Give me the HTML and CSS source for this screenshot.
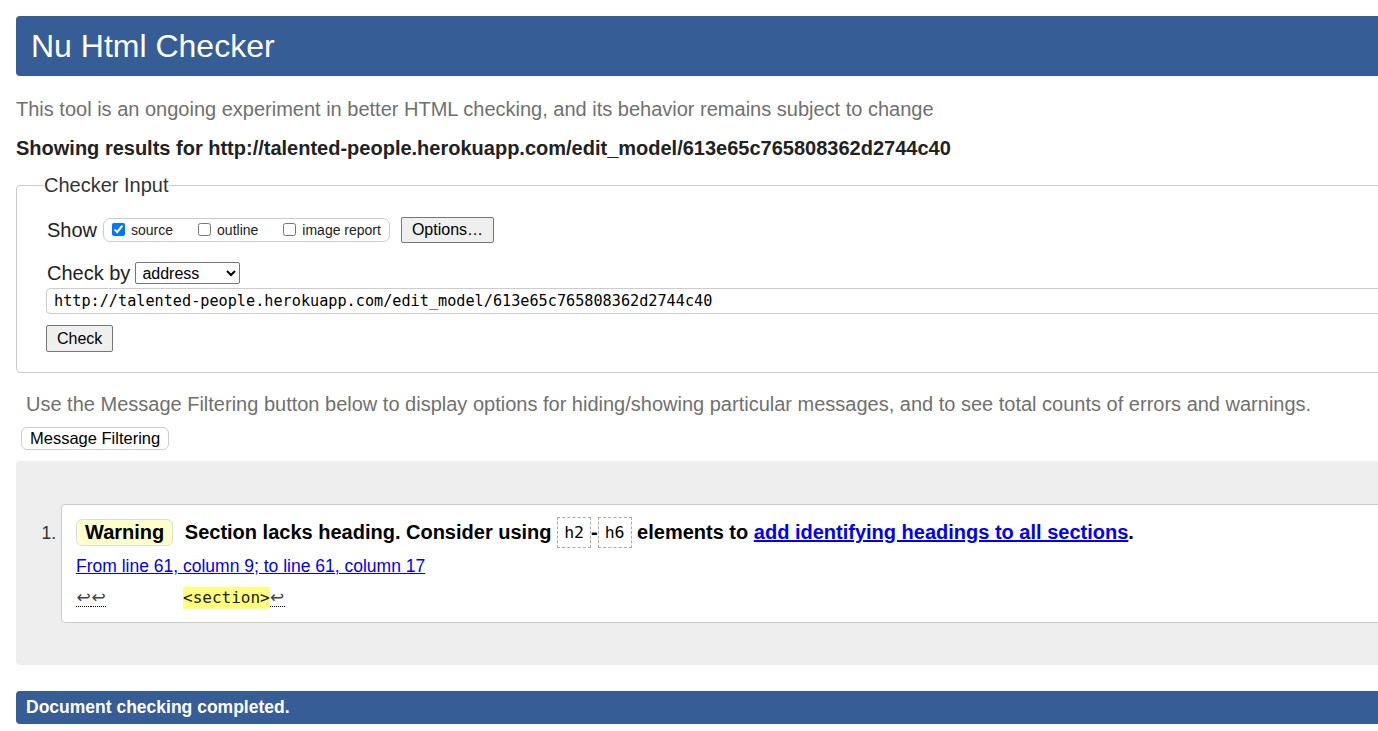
FILE: index.html
```html
<!DOCTYPE html>
<html lang="en">
<head>
<meta charset="utf-8">
<title>Nu Html Checker</title>
<link rel="stylesheet" href="styles.css">
</head>
<body>
<div class="page">
  <h1 class="title">Nu Html Checker</h1>
  <p class="intro">This tool is an ongoing experiment in better HTML checking, and its behavior remains subject to change</p>
  <p class="showing">Showing results for http://talented-people.herokuapp.com/edit_model/613e65c765808362d2744c40</p>
  <form class="checker-form">
    <fieldset class="checker">
      <legend class="legend">Checker Input</legend>
      <div class="row show-row">
        <span class="lbl">Show</span>
        <span class="opts">
          <label class="opt"><input class="cb" type="checkbox" checked>source</label>
          <label class="opt"><input class="cb" type="checkbox">outline</label>
          <label class="opt"><input class="cb" type="checkbox">image report</label>
        </span>
        <button class="btn options-btn" type="button">Options…</button>
      </div>
      <div class="row by-row">
        <span class="lbl">Check by</span>
        <select class="sel"><option>address</option></select>
      </div>
      <input class="url" type="text" value="http://talented-people.herokuapp.com/edit_model/613e65c765808362d2744c40">
      <button class="btn check-btn" type="button">Check</button>
    </fieldset>
  </form>
  <p class="filter-note">Use the Message Filtering button below to display options for hiding/showing particular messages, and to see total counts of errors and warnings.</p>
  <button class="filter-btn" type="button">Message Filtering</button>
  <div class="results">
    <ol class="msgs">
      <li class="msg">
        <p class="message"><span class="badge">Warning</span> Section lacks heading. Consider using <code class="tag">h2</code>-<code class="tag">h6</code> elements to <a class="ref" href="#">add identifying headings to all sections</a>.</p>
        <p class="location"><a class="loc" href="#">From line 61, column 9; to line 61, column 17</a></p>
        <p class="extract"><span class="lf">↩</span><span class="lf">↩</span><span class="gap"></span><b class="hl">&lt;section&gt;</b><span class="lf">↩</span></p>
      </li>
    </ol>
  </div>
  <p class="done">Document checking completed.</p>
</div>
</body>
</html>
```
FILE: styles.css
```css
html {
  overflow: hidden;
  background: #fff;
}

body {
  margin: 16px 0 0 16px;
  font-family: "Liberation Sans", Arial, sans-serif;
  font-size: 20px;
  color: #000;
}

.page {
  width: 1380px;
}

.title {
  margin: 0;
  height: 60px;
  line-height: 60px;
  padding: 0 15px;
  background: #365d95;
  color: #fff;
  font-size: 32px;
  font-weight: normal;
  border-radius: 4px;
}

.intro {
  margin: 21px 0 0;
  line-height: 24px;
  color: #707070;
}

.showing {
  margin: 15px 0 0;
  line-height: 24px;
  font-weight: bold;
  color: #222;
}

.checker-form {
  margin: 13px 0 0;
}

.checker {
  margin: 0;
  padding: 20px 0 20px 29px;
  border: 1px solid #ccc;
  border-radius: 4px;
}

.legend {
  padding: 0;
  margin-left: -2px;
  line-height: 24px;
  color: #333;
}

.row {
  display: flex;
  align-items: center;
}

.lbl {
  color: #222;
  margin-left: 1px;
}

.show-row {
  height: 26px;
}

.show-row .lbl {
  margin-right: 6px;
}

.opts {
  display: inline-flex;
  align-items: center;
  height: 24px;
  box-sizing: border-box;
  border: 1px solid #ccc;
  border-radius: 7px;
  padding: 0 8px 0 8px;
  font-size: 14px;
  color: #222;
}

.opt {
  display: inline-flex;
  align-items: center;
}

.opt + .opt {
  margin-left: 25px;
}

.cb {
  margin: 0 6px 2px 0;
  width: 13px;
  height: 13px;
}

.btn {
  font-family: "Liberation Sans", Arial, sans-serif;
  font-size: 16px;
  color: #000;
  background: #efefef;
  border: 1px solid #767676;
  border-radius: 2px;
  box-sizing: border-box;
}

.options-btn {
  margin-left: 11px;
  height: 26px;
  padding: 0 10px;
}

.by-row {
  margin-top: 18px;
  height: 24px;
}

.sel {
  margin-left: 5px;
  width: 105px;
  height: 22px;
  font-family: "Liberation Sans", Arial, sans-serif;
  font-size: 16px;
  color: #000;
  background: #fff;
  border: 1px solid #767676;
  border-radius: 2px;
  padding: 0 2px;
}

.url {
  display: block;
  margin-top: 3px;
  width: 1400px;
  height: 26px;
  box-sizing: border-box;
  border: 1px solid #ccc;
  border-radius: 4px;
  padding: 0 7px;
  font-family: "DejaVu Sans Mono", monospace;
  font-size: 15.2px;
  line-height: 22px;
  color: #000;
}

.check-btn {
  display: block;
  margin-top: 11px;
  height: 27px;
  padding: 0 10px;
}

.filter-note {
  margin: 19px 0 0;
  padding-left: 10px;
  line-height: 24px;
  color: #707070;
}

.filter-btn {
  display: block;
  margin: 11px 0 0 5px;
  height: 23px;
  padding: 0 8px;
  box-sizing: border-box;
  font-family: "Liberation Sans", Arial, sans-serif;
  font-size: 16.5px;
  color: #000;
  background: #fff;
  border: 1px solid #ccc;
  border-radius: 6px;
}

.results {
  margin-top: 11px;
  background: #eee;
  border-radius: 4px;
  padding: 43px 0 42px;
}

.msgs {
  margin: 0;
  padding-left: 45px;
}

.msg {
  background: #fff;
  border: 1px solid #ccc;
  border-radius: 4px;
  padding: 12px 14px 13px 14px;
  font-size: 17.5px;
  color: #222;
}

.msg::marker {
  color: #333;
}

.message {
  margin: 0;
  line-height: 31px;
  font-size: 20px;
  font-weight: bold;
  color: #000;
}

.badge {
  display: inline-block;
  line-height: 25px;
  padding: 0 8px;
  margin: 2px 6px 0 0;
  background: #ffffcc;
  border: 1px solid #ddd;
  border-radius: 6px;
  vertical-align: top;
}

.tag {
  display: inline-block;
  line-height: 29px;
  padding: 0 6px;
  margin: 0;
  border: 1px dashed #aaa;
  font-family: "DejaVu Sans Mono", monospace;
  font-size: 16.5px;
  font-weight: normal;
  vertical-align: top;
}

.ref {
  color: #00e;
  text-decoration: underline;
}

.location {
  margin: 7px 0 0;
  line-height: 22px;
}

.loc {
  color: #00e;
  text-decoration: underline;
}

.extract {
  margin: 10px 0 0;
  line-height: 22px;
  font-family: "DejaVu Sans Mono", monospace;
  font-size: 16px;
  display: flex;
  align-items: baseline;
}

.lf {
  display: inline-block;
  width: 15px;
  border-bottom: 1px dotted #000;
  line-height: 18px;
  font-family: "DejaVu Sans", sans-serif;
  font-size: 17px;
  color: #444;
  text-align: center;
}

.gap {
  display: inline-block;
  width: 77px;
}

.hl {
  font-weight: normal;
  background: #ffff80;
}

.done {
  margin: 26px 0 0;
  height: 33px;
  line-height: 33px;
  padding: 0 10px;
  background: #365d95;
  color: #fff;
  font-size: 17.5px;
  font-weight: bold;
  border-radius: 4px;
}
```
